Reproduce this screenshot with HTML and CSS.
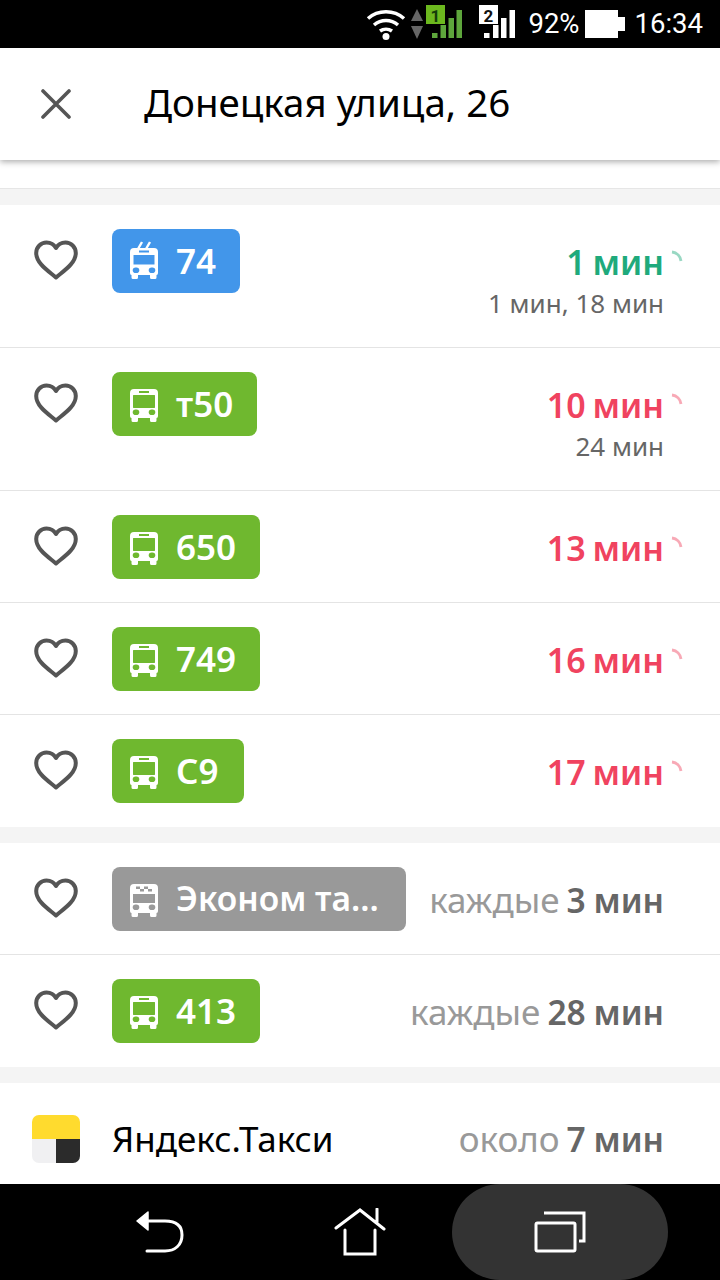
FILE: index.html
```html
<!DOCTYPE html>
<html lang="ru">
<head>
<meta charset="utf-8">
<title>Донецкая улица, 26</title>
<link rel="stylesheet" href="styles.css">
</head>
<body>
<svg class="defs" width="0" height="0">
  <defs>
    <symbol id="heart" viewBox="0 0 44 40">
      <path d="M22 37.500C16 32 2.200 24 2.200 13C2.200 7 7 2.500 12.500 2.500C16.500 2.500 20 4.500 22 8C24 4.500 27.500 2.500 31.500 2.500C37 2.500 41.800 7 41.800 13C41.800 24 28 32 22 37.500Z" fill="none" stroke="#555" stroke-width="4" stroke-linejoin="round"/>
    </symbol>
    <symbol id="bus" viewBox="0 0 28 33">
      <path fill="#fff" fill-rule="evenodd" d="M4 0H24Q28 0 28 4V27Q28 29 26.500 29V31.500Q26.500 33 25 33H21.500Q20 33 20 31.500V29H8V31.500Q8 33 6.500 33H3Q1.500 33 1.500 31.500V29Q0 29 0 27V4Q0 0 4 0ZM9 2V4H19V2ZM3.500 6H24.500Q25 6 25 6.500V18Q25 19 24.500 19H3.500Q3 19 3 18V6.500Q3 6 3.500 6ZM6 20.500A2.800 2.800 0 1 0 6 26A2.800 2.800 0 1 0 6 20.500ZM22 20.500A2.800 2.800 0 1 0 22 26A2.800 2.800 0 1 0 22 20.500Z"/>
    </symbol>
    <symbol id="trolley" viewBox="0 0 28 38">
      <path fill="none" stroke="#fff" stroke-width="2.400" d="M8 8L12 1M16 8L20 1"/>
      <path fill="#fff" fill-rule="evenodd" d="M4 7H24Q28 7 28 11V32Q28 34 26.500 34V36.500Q26.500 38 25 38H21.500Q20 38 20 36.500V34H8V36.500Q8 38 6.500 38H3Q1.500 38 1.500 36.500V34Q0 34 0 32V11Q0 7 4 7ZM9 9.500V11.500H19V9.500ZM3.500 14H24.500V23.500H3.500ZM6 26.500A2.800 2.800 0 1 0 6 32A2.800 2.800 0 1 0 6 26.500ZM22 26.500A2.800 2.800 0 1 0 22 32A2.800 2.800 0 1 0 22 26.500Z"/>
    </symbol>
    <symbol id="taxibus" viewBox="0 0 28 33">
      <path fill="#fff" fill-rule="evenodd" d="M4 0H24Q28 0 28 4V27Q28 29 26.500 29V31.500Q26.500 33 25 33H21.500Q20 33 20 31.500V29H8V31.500Q8 33 6.500 33H3Q1.500 33 1.500 31.500V29Q0 29 0 27V4Q0 0 4 0ZM3 10H25V19H3ZM6 20.500A2.800 2.800 0 1 0 6 26A2.800 2.800 0 1 0 6 20.500ZM22 20.500A2.800 2.800 0 1 0 22 26A2.800 2.800 0 1 0 22 20.500Z"/>
      <path fill="#999" d="M6 2.500H10V5H6ZM14 2.500H18V5H14ZM10 5H14V7.500H10ZM18 5H22V7.500H18Z"/>
    </symbol>
    <symbol id="spin" viewBox="0 0 14 14">
      <path d="M2 2A10 10 0 0 1 11 11" fill="none" stroke="currentColor" stroke-width="2.800"/>
    </symbol>
  </defs>
</svg>
<div class="screen">
  <header class="status">
    <svg class="st-wifi" width="40" height="32" viewBox="0 0 40 32"><g fill="none" stroke="#fff" stroke-width="3.500"><path d="M2 10.500C12 1.500 28 1.500 38 10.500"/><path d="M8 17C15 11 25 11 32 17"/><path d="M14 23C17.500 20.500 22.500 20.500 26 23"/></g><circle cx="20" cy="28.500" r="3.500" fill="#fff"/></svg>
    <svg class="st-arrows" width="12" height="30" viewBox="0 0 12 30"><path d="M6 0L12 12H0Z" fill="#666"/><path d="M6 30L12 17H0Z" fill="#666"/></svg>
    <svg class="st-sim" width="36" height="34" viewBox="0 0 36 34"><g fill="#5ea63c"><rect x="6" y="28" width="5.500" height="5"/><rect x="14.500" y="20" width="5.500" height="13"/><rect x="22.500" y="13" width="5.500" height="20"/><rect x="30.500" y="5" width="5.500" height="28"/></g><rect width="19" height="19" fill="#6cb81e"/><text x="9.500" y="16.500" class="sim-n sim-green">1</text></svg>
    <svg class="st-sim2" width="36" height="34" viewBox="0 0 36 34"><g fill="#fff"><rect x="5" y="28" width="5.500" height="5"/><rect x="14" y="20" width="5.500" height="13"/><rect x="22" y="13" width="5.500" height="20"/><rect x="30.500" y="5" width="5.500" height="28"/></g><rect width="19" height="19" fill="#fff"/><text x="9.500" y="16.500" class="sim-n sim-dark">2</text></svg>
    <span class="st-text st-pct">92%</span>
    <svg class="st-batt" width="40" height="28" viewBox="0 0 40 28"><path d="M0 0H33V7H40V21H33V28H0Z" fill="#fff"/></svg>
    <span class="st-text">16:34</span>
  </header>

  <div class="topbar">
    <svg class="close" width="30" height="30" viewBox="0 0 30 30"><path d="M2 2L28 28M28 2L2 28" stroke="#555" stroke-width="3.600" stroke-linecap="round"/></svg>
    <h1 class="title">Донецкая улица, 26</h1>
  </div>

  <main class="content">
    <div class="pad"></div>
    <section class="group">
      <div class="row row-tall">
        <svg class="heart"><use href="#heart"/></svg>
        <div class="badge blue w-74"><svg class="ic-trolley"><use href="#trolley"/></svg><span>74</span></div>
        <div class="times">
          <div class="main green">1 мин<svg class="spin"><use href="#spin"/></svg></div>
          <div class="sub">1 мин, 18 мин</div>
        </div>
      </div>
      <div class="row row-tall">
        <svg class="heart"><use href="#heart"/></svg>
        <div class="badge green-bg w-t50"><svg class="ic-bus"><use href="#bus"/></svg><span>т50</span></div>
        <div class="times">
          <div class="main red">10 мин<svg class="spin"><use href="#spin"/></svg></div>
          <div class="sub">24 мин</div>
        </div>
      </div>
      <div class="row">
        <svg class="heart"><use href="#heart"/></svg>
        <div class="badge green-bg w-650"><svg class="ic-bus"><use href="#bus"/></svg><span>650</span></div>
        <div class="times"><div class="main red">13 мин<svg class="spin"><use href="#spin"/></svg></div></div>
      </div>
      <div class="row">
        <svg class="heart"><use href="#heart"/></svg>
        <div class="badge green-bg w-650"><svg class="ic-bus"><use href="#bus"/></svg><span>749</span></div>
        <div class="times"><div class="main red">16 мин<svg class="spin"><use href="#spin"/></svg></div></div>
      </div>
      <div class="row">
        <svg class="heart"><use href="#heart"/></svg>
        <div class="badge green-bg w-c9"><svg class="ic-bus"><use href="#bus"/></svg><span>С9</span></div>
        <div class="times"><div class="main red">17 мин<svg class="spin"><use href="#spin"/></svg></div></div>
      </div>
    </section>
    <section class="group">
      <div class="row row-periodic">
        <svg class="heart"><use href="#heart"/></svg>
        <div class="badge gray-bg w-eco"><svg class="ic-bus"><use href="#taxibus"/></svg><span class="eco-label">Эконом та...</span></div>
        <div class="times"><div class="period">каждые <b>3 мин</b></div></div>
      </div>
      <div class="row row-periodic">
        <svg class="heart"><use href="#heart"/></svg>
        <div class="badge green-bg w-650"><svg class="ic-bus"><use href="#bus"/></svg><span>413</span></div>
        <div class="times"><div class="period">каждые <b>28 мин</b></div></div>
      </div>
    </section>
    <section class="group">
      <div class="row-taxi">
        <svg class="logo" width="48" height="48" viewBox="0 0 48 48"><defs><clipPath id="lc"><rect width="48" height="48" rx="7"/></clipPath></defs><g clip-path="url(#lc)"><rect width="48" height="24" fill="#ffdb2e"/><rect y="24" width="24" height="24" fill="#f0f0f2"/><rect x="24" y="24" width="24" height="24" fill="#2b2b2b"/></g></svg>
        <span class="taxi-name">Яндекс.Такси</span>
        <div class="times"><div class="period">около <b>7 мин</b></div></div>
      </div>
    </section>
  </main>

  <nav class="navbar">
    <div class="nav-slot nav-back">
      <svg width="48" height="44" viewBox="0 0 48 44"><path d="M1 11L12 2V20Z" fill="#fff" stroke="#fff" stroke-width="1.500" stroke-linejoin="round"/><path d="M10 11H29C39 11 46 15 46 25C46 35 39 41 29 41H11" fill="none" stroke="#fff" stroke-width="3" stroke-linecap="round"/></svg>
    </div>
    <div class="nav-slot nav-home">
      <svg width="52" height="48" viewBox="0 0 52 48"><path d="M2 20L26 2L50 21M43 1V14M11 22V46H41V22" fill="none" stroke="#fff" stroke-width="3" stroke-linecap="round"/></svg>
    </div>
    <div class="nav-pill">
      <svg width="52" height="42" viewBox="0 0 52 42"><path d="M10 2H50V30H45" fill="none" stroke="#fff" stroke-width="3"/><rect x="2" y="12" width="39" height="28" rx="1.500" fill="none" stroke="#fff" stroke-width="3"/></svg>
    </div>
  </nav>
</div>
</body>
</html>
```
FILE: styles.css
```css
* { box-sizing: border-box; }
html, body { margin: 0; padding: 0; background: #fff; }
.defs { position: absolute; }
.screen {
  width: 720px;
  height: 1280px;
  display: flex;
  flex-direction: column;
  overflow: hidden;
  font-family: "Noto Sans", "Open Sans", sans-serif;
}
.status {
  height: 48px;
  flex: none;
  background: #000;
  display: flex;
  align-items: center;
  justify-content: flex-end;
  padding-right: 17px;
  color: #fff;
}
.st-wifi { margin-right: 5px; }
.st-arrows { margin-right: 3px; }
.st-sim { margin-right: 17px; margin-top: -5px; }
.st-sim2 { margin-right: 13px; margin-top: -5px; }
.st-text { font-family: "Roboto", sans-serif; font-size: 27.500px; line-height: 50px; }
.st-pct { margin-right: 5px; }
.st-batt { margin-right: 10px; }
.sim-n { font-family: "Roboto", sans-serif; font-size: 17px; font-weight: 700; text-anchor: middle; }
.sim-dark { fill: #111; }
.sim-green { fill: #143d0a; }
.topbar {
  height: 112px;
  flex: none;
  background: #fff;
  display: flex;
  align-items: center;
  position: relative;
  z-index: 1;
  box-shadow: 0 2px 6px rgba(0, 0, 0, 0.32);
}
.close { margin-left: 41px; flex: none; }
.title {
  margin: 0 0 4px 73px;
  font-size: 38.500px;
  font-weight: 400;
  color: #000;
  line-height: 108px;
  white-space: nowrap;
}
.content {
  flex: 1;
  min-height: 0;
  overflow: hidden;
  background: #f4f4f4;
}
.pad { height: 29px; background: #fff; border-bottom: 1px solid #e6e6e6; }
.group { background: #fff; margin-top: 16px; }
.row {
  height: 112px;
  display: flex;
  align-items: flex-start;
  border-bottom: 1px solid #e4e4e4;
  padding: 24px 0 0 0;
}
.group > .row:last-child { border-bottom: 0; }
.row-tall { height: 143px; }
.heart { width: 44px; height: 40px; margin: 11px 34px 0 34px; flex: none; }
.badge {
  height: 64px;
  border-radius: 8px;
  display: flex;
  align-items: center;
  padding-left: 18px;
  color: #fff;
  font-size: 35px;
  font-weight: 600;
  white-space: nowrap;
  flex: none;
}
.badge span { margin: 0 0 2px 18px; }
.badge .eco-label { font-size: 33.500px; }
.blue { background: #4296ea; }
.green-bg { background: #6fb82f; }
.gray-bg { background: #999; }
.w-74 { width: 128px; }
.w-t50 { width: 145px; }
.w-650 { width: 148px; }
.w-c9 { width: 132px; }
.w-eco { width: 294px; }
.ic-bus { width: 28px; height: 33px; flex: none; margin-top: 3px; }
.ic-trolley { width: 28px; height: 38px; flex: none; margin-top: -3px; }
.times { margin-left: auto; padding-right: 56px; text-align: right; }
.main {
  font-size: 34px;
  word-spacing: -2px;
  font-weight: 600;
  line-height: 44px;
  position: relative;
  margin-top: 11px;
  white-space: nowrap;
}
.green { color: #1faa7c; }
.red { color: #f0435f; }
.spin { position: absolute; right: -20px; top: 10px; width: 14px; height: 14px; opacity: 0.45; }
.sub { font-size: 26px; color: #666; line-height: 36px; margin-top: 1px; white-space: nowrap; }
.row-periodic .times { margin-top: 11px; }
.period { font-size: 35px; line-height: 44px; color: #999; white-space: nowrap; }
.period b { color: #666; font-weight: 600; font-size: 33.500px; word-spacing: -1px; margin-left: -2px; }
.row-taxi {
  height: 112px;
  display: flex;
  align-items: center;
}
.logo { margin-left: 32px; flex: none; }
.taxi-name { margin: 0 0 2px 32px; font-size: 35px; color: #000; white-space: nowrap; }
.navbar {
  height: 96px;
  flex: none;
  background: #000;
  display: flex;
  align-items: center;
}
.nav-slot { display: flex; justify-content: center; align-items: center; flex: none; }
.nav-back { margin-left: 136px; width: 48px; }
.nav-home { margin-left: 150px; width: 52px; }
.nav-pill {
  margin-left: 66px;
  width: 216px;
  height: 96px;
  border-radius: 48px;
  background: #333;
  display: flex;
  align-items: center;
  justify-content: center;
}
```
